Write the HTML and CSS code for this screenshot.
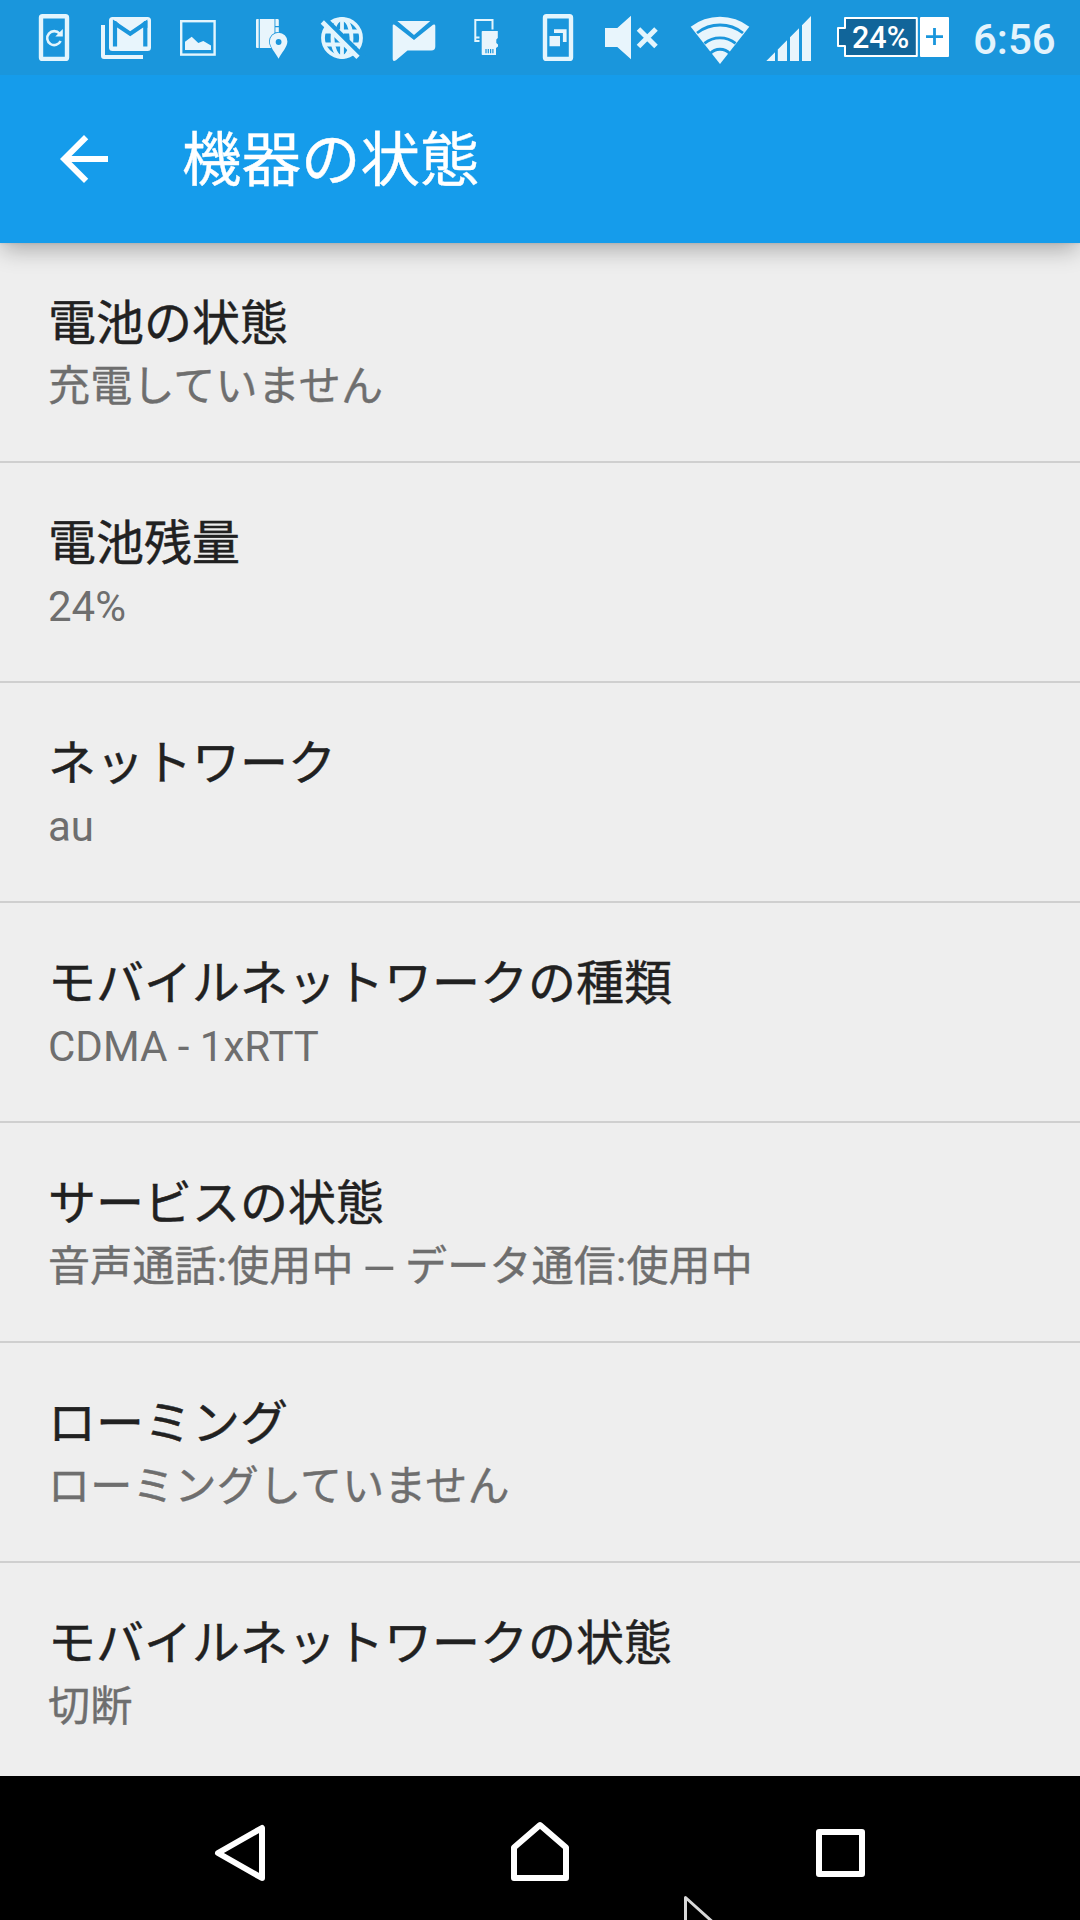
FILE: index.html
```html
<!DOCTYPE html>
<html lang="ja">
<head>
<meta charset="utf-8">
<title>機器の状態</title>
<link rel="stylesheet" href="styles.css">
</head>
<body>
<div class="screen">
  <header class="status-bar">
    <!-- phone sync -->
    <svg class="cell" viewBox="18 0 72 75"><rect class="line" x="41" y="16.3" width="26" height="42.6" rx="1.5" stroke-width="4.4"/><path class="line" d="M59.5 33.5A7 7 0 1 0 60.6 41" stroke-width="2.6"/><path d="M62.8 29V36.500H55.300Z"/></svg>
    <!-- stacked mail -->
    <svg class="cell" viewBox="90 0 72 75"><path d="M101 25h4v30h38v4H104a3 3 0 0 1-3-3z"/><rect x="109" y="17" width="42" height="34" rx="3.500"/><path class="cut" d="M115 46.500V23.500L130.200 33.800 145.300 23.500V46.500" stroke-width="4.200"/><path class="bg" d="M113 21h3l3 3-6 4zM147.400 21h-3l-3 3 6 4z"/></svg>
    <!-- picture -->
    <svg class="cell" viewBox="162 0 72 75"><rect class="line" x="181.200" y="21.200" width="33.400" height="33.400" stroke-width="2.400"/><path d="M185 41.700 191.700 36.700 198.300 43 203.300 41 211 45.500V50H185z"/></svg>
    <!-- map and pin -->
    <svg class="cell" viewBox="234 0 72 75"><path d="M257 19h1.700v29H257a1 1 0 0 1-1-1V20a1 1 0 0 1 1-1zM259.800 19h14.700v29h-14.700zM275.400 19h2.600l.8.8V26h-3.400zM275.400 27.300h3.400v5.200h-3.400z"/><path class="pin" d="M278.600 58.800C275 52 269.800 47 269.800 41.500a8.800 8.800 0 0 1 17.600 0C287.400 47 282 52 278.600 58.800z"/><circle class="bg" cx="278.600" cy="42" r="2.900"/></svg>
    <!-- network off -->
    <svg class="cell" viewBox="306 0 72 75"><g class="line" stroke-width="3.800"><circle cx="342" cy="38" r="19"/><ellipse cx="342" cy="38" rx="9.500" ry="19"/><path d="M325 31.500H359M324 44.500H360M342 19V57"/></g><path class="cut" d="M322 16 364 57.500" stroke-width="5"/><path class="line" d="M322.300 22 358 57.300" stroke-width="4.600"/></svg>
    <!-- message -->
    <svg class="cell" viewBox="378 0 72 75"><path d="M397.300 21H430.300L414 35z"/><path d="M392.700 25.500Q392.700 24 394.500 24.800L414 40 433 24.800Q435.300 24 435.300 26V46.500a4 4 0 0 1-4 4H407.500L396 60.300Q392.700 62 392.700 59z"/></svg>
    <!-- memory card transfer -->
    <svg class="cell" viewBox="450 0 72 75"><path class="line" d="M492.500 29.500V20H475.300V41H479.500M475 37.500H479.500" stroke-width="2"/><path d="M482.500 31H497.800V38L496.300 39.500V43L498 44.500V46.500L496 48V55H482.500a.8.8 0 0 1-.8-.8V31.800a.8.8 0 0 1 .8-.8z"/><path class="cut" d="M486 49v4.300M488.300 49v4.300M490.600 49v4.300M492.900 49v4.300" stroke-width="1.200"/></svg>
    <!-- floating windows -->
    <svg class="cell" viewBox="522 0 72 75"><rect class="line" x="545" y="16.300" width="26" height="42.600" rx="1.500" stroke-width="4.400"/><path d="M549.500 36H560v10.300h-10.500zM554 29.200h12.600V42h-3.700V33H554z"/></svg>
    <!-- muted -->
    <svg class="cell" viewBox="594 0 72 75"><path d="M605 28h12.300L631 15.700V59.300L617.300 47H605z"/><path class="line" d="M638.500 29 656 46.500M656 29 638.500 46.500" stroke-width="5"/></svg>
    <svg class="wifi" viewBox="684 0 72 75"><path d="M720 64 690.700 26.800A47.500 47.500 0 0 1 749.300 26.800z"/><path class="cut" d="M697 33A37 37 0 0 1 743 33M704.400 43.300A25 25 0 0 1 735.600 43.300M710 53.700A13.500 13.500 0 0 1 730 53.700" stroke-width="2.800"/></svg>
    <svg class="signal" viewBox="756 0 66 75"><path d="M766.300 61 775 52.300V61zM777.800 49.500 787 40.300V61H777.800zM790 37.300 799 28.300V61H790zM802 25.300 811 16V61H802z"/></svg>
    <svg class="battery" viewBox="822 0 140 75"><path class="shell" d="M846 18H916.800V56H845V46H838V28H845V18z"/><path class="white" d="M920 18a1 1 0 0 1 1-1H948a1 1 0 0 1 1 1V56a1 1 0 0 1-1 1H921a1 1 0 0 1-1-1z"/><path class="cut" d="M926 36.600h17M934.500 28v17" stroke-width="2.800"/><text class="level" x="852" y="47.800">24%</text></svg>
    <span class="clock">6:56</span>
  </header>
  <div class="app-bar">
    <svg class="back" viewBox="0 0 24 24"><path d="M20 11H7.830l5.590-5.590L12 4l-8 8 8 8 1.410-1.410L7.830 13H20v-2z"/></svg>
    <h1>機器の状態</h1>
  </div>
  <main class="list">
    <section class="row"><h2>電池の状態</h2><p class="kana">充電していません</p></section>
    <section class="row"><h2>電池残量</h2><p>24%</p></section>
    <section class="row"><h2>ネットワーク</h2><p>au</p></section>
    <section class="row"><h2>モバイルネットワークの種類</h2><p>CDMA - 1xRTT</p></section>
    <section class="row"><h2>サービスの状態</h2><p class="kana">音声通話:使用中 <span class="dash">–</span> データ通信:使用中</p></section>
    <section class="row"><h2>ローミング</h2><p class="kana">ローミングしていません</p></section>
    <section class="row"><h2>モバイルネットワークの状態</h2><p class="kana">切断</p></section>
  </main>
  <nav class="nav-bar">
    <svg viewBox="0 1776 1080 144"><path d="M262 1828V1878L218 1853zM514 1878V1847.500L540 1825 566 1847.500V1878zM819 1832H862V1874H819z"/><path class="pointer" d="M685.500 1925V1897.500L716 1925"/></svg>
  </nav>
</div>
</body>
</html>
```
FILE: styles.css
```css
* { box-sizing: border-box; }
body { margin: 0; }
h1, h2, p { margin: 0; font-weight: 400; white-space: nowrap; }

.screen {
  width: 1080px;
  height: 1920px;
  display: flex;
  flex-direction: column;
  overflow: hidden;
  background: #eee;
  font-family: Roboto, "Noto Sans CJK JP", sans-serif;
}

.status-bar {
  flex: none;
  height: 75px;
  padding-left: 18px;
  display: flex;
  background: #1a96dc;
  z-index: 2;
}
.status-bar svg { flex: none; height: 75px; fill: #e8f5fc; }
.cell { width: 72px; }
.wifi { width: 72px; margin-left: 18px; }
.signal { width: 66px; }
.battery { width: 140px; }
.status-bar .line { fill: none; stroke: #e3f5fd; }
.status-bar .cut { fill: none; stroke: #1a96dc; }
.status-bar .bg { fill: #1a96dc; }
.status-bar .pin { stroke: #1a96dc; stroke-width: 1.6; paint-order: stroke; }
.status-bar .shell { fill: #11659a; stroke: #fff; stroke-width: 2; stroke-linejoin: round; }
.status-bar .white { fill: #fff; }
.status-bar .level { fill: #fff; font-size: 30.5px; font-weight: 500; }
.clock {
  margin-left: 11px;
  font-size: 42px;
  line-height: 80px;
  font-weight: 500;
  color: #e3f3fc;
}

.app-bar {
  flex: none;
  height: 168px;
  padding-left: 48px;
  display: flex;
  align-items: center;
  gap: 62px;
  background: #159ceb;
  box-shadow: 0 8px 22px -2px rgba(0, 0, 0, .3), 0 1px 2px rgba(0, 0, 0, .06);
  z-index: 1;
}
.back { width: 72px; height: 72px; fill: #fff; }
.app-bar h1 {
  padding-top: 4px;
  font-size: 59.5px;
  line-height: 84px;
  color: #fff;
  -webkit-text-stroke: .4px #fff;
}

.list { flex: 1; min-height: 0; overflow: hidden; }
.row {
  height: 220px;
  padding: 48px 48px 0;
  border-bottom: 2px solid #cfcfcf;
}
.row:last-child { border-bottom: 0; }
.row h2 {
  font-size: 48px;
  line-height: 66px;
  color: #212121;
  -webkit-text-stroke: .4px #212121;
}
.row p {
  font-size: 42px;
  line-height: 60px;
  color: #6e6e6e;
}
.row .kana {
  letter-spacing: .2px;
  -webkit-text-stroke: .4px #6e6e6e;
}
.dash {
  margin: 0 1px;
  font-family: "Liberation Sans", sans-serif;
  font-size: 50px;
  line-height: 0;
  -webkit-text-stroke: 0;
}

.nav-bar { flex: none; height: 144px; background: #000; }
.nav-bar svg {
  display: block;
  width: 1080px;
  height: 144px;
  fill: none;
  stroke: #fff;
  stroke-width: 6;
  stroke-linejoin: round;
}
.nav-bar .pointer { stroke: #d8d8d8; stroke-width: 3; }
```
